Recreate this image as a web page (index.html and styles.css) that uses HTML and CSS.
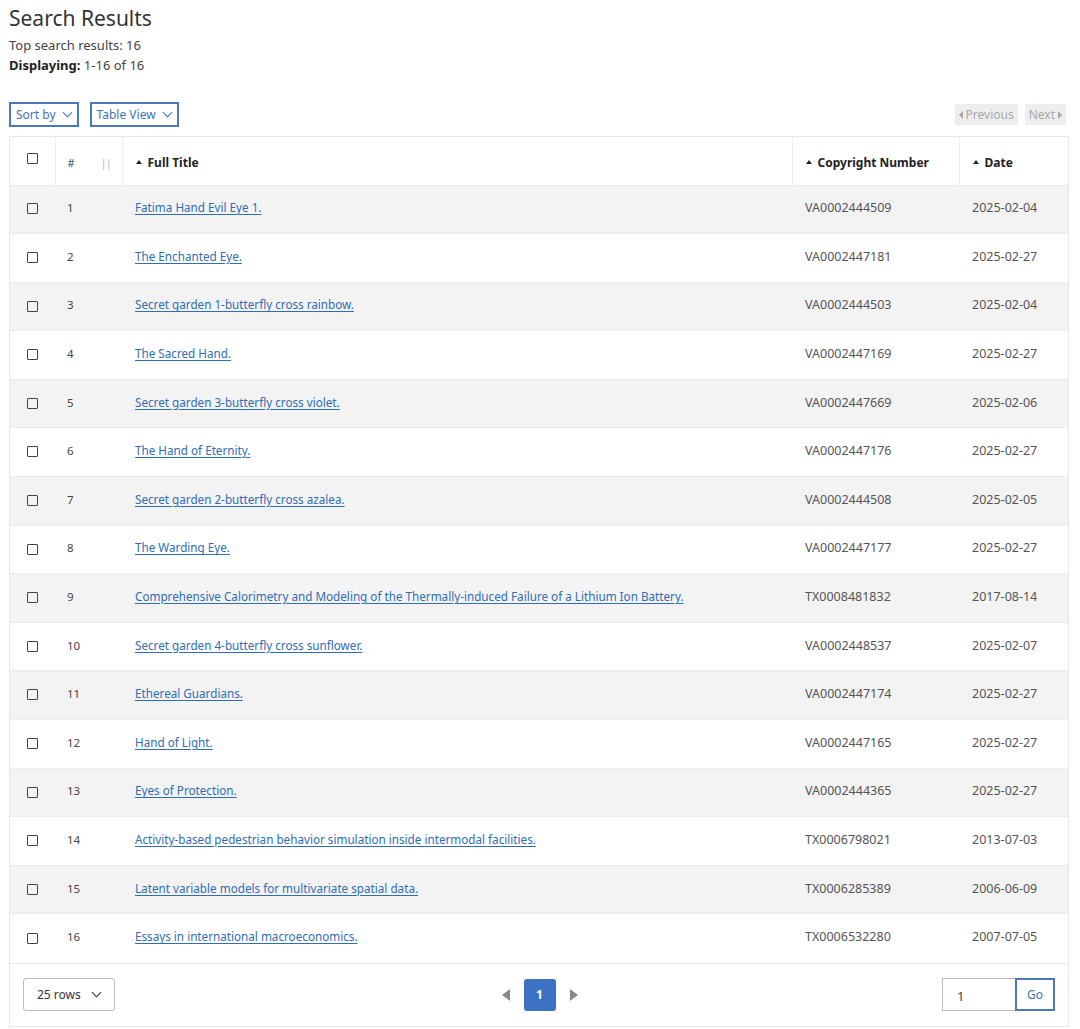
FILE: index.html
```html
<!doctype html>
<html>
<head>
<title>Search Results</title>
<link rel="stylesheet" href="styles.css">
</head>
<body>
<main>
	<h1>Search Results</h1>
	<p class="summary">Top search results: 16</p>
	<p class="summary"><b>Displaying:</b> 1-16 of 16</p>

	<div class="toolbar">
		<div class="dropdowns">
			<div class="drop">Sort by <span class="chev"></span></div>
			<div class="drop">Table View <span class="chev"></span></div>
		</div>
		<div class="pager">
			<div class="pbtn"><span class="tri-l"></span>Previous</div>
			<div class="pbtn">Next<span class="tri-r"></span></div>
		</div>
	</div>

	<div class="results">
		<table>
			<thead>
				<tr>
					<th class="c-check"><span class="box"></span></th>
					<th class="c-num">#<span class="grip">||</span></th>
					<th class="c-title"><span class="caret"></span>Full Title</th>
					<th class="c-copy"><span class="caret"></span>Copyright Number</th>
					<th class="c-date"><span class="caret"></span>Date</th>
				</tr>
			</thead>
			<tbody>
				<tr><td><span class="box"></span></td><td>1</td><td><a href="#">Fatima Hand Evil Eye 1.</a></td><td>VA0002444509</td><td>2025-02-04</td></tr>
				<tr><td><span class="box"></span></td><td>2</td><td><a href="#">The Enchanted Eye.</a></td><td>VA0002447181</td><td>2025-02-27</td></tr>
				<tr><td><span class="box"></span></td><td>3</td><td><a href="#">Secret garden 1-butterfly cross rainbow.</a></td><td>VA0002444503</td><td>2025-02-04</td></tr>
				<tr><td><span class="box"></span></td><td>4</td><td><a href="#">The Sacred Hand.</a></td><td>VA0002447169</td><td>2025-02-27</td></tr>
				<tr><td><span class="box"></span></td><td>5</td><td><a href="#">Secret garden 3-butterfly cross violet.</a></td><td>VA0002447669</td><td>2025-02-06</td></tr>
				<tr><td><span class="box"></span></td><td>6</td><td><a href="#">The Hand of Eternity.</a></td><td>VA0002447176</td><td>2025-02-27</td></tr>
				<tr><td><span class="box"></span></td><td>7</td><td><a href="#">Secret garden 2-butterfly cross azalea.</a></td><td>VA0002444508</td><td>2025-02-05</td></tr>
				<tr><td><span class="box"></span></td><td>8</td><td><a href="#">The Warding Eye.</a></td><td>VA0002447177</td><td>2025-02-27</td></tr>
				<tr><td><span class="box"></span></td><td>9</td><td><a href="#">Comprehensive Calorimetry and Modeling of the Thermally-induced Failure of a Lithium Ion Battery.</a></td><td>TX0008481832</td><td>2017-08-14</td></tr>
				<tr><td><span class="box"></span></td><td>10</td><td><a href="#">Secret garden 4-butterfly cross sunflower.</a></td><td>VA0002448537</td><td>2025-02-07</td></tr>
				<tr><td><span class="box"></span></td><td>11</td><td><a href="#">Ethereal Guardians.</a></td><td>VA0002447174</td><td>2025-02-27</td></tr>
				<tr><td><span class="box"></span></td><td>12</td><td><a href="#">Hand of Light.</a></td><td>VA0002447165</td><td>2025-02-27</td></tr>
				<tr><td><span class="box"></span></td><td>13</td><td><a href="#">Eyes of Protection.</a></td><td>VA0002444365</td><td>2025-02-27</td></tr>
				<tr><td><span class="box"></span></td><td>14</td><td><a href="#">Activity-based pedestrian behavior simulation inside intermodal facilities.</a></td><td>TX0006798021</td><td>2013-07-03</td></tr>
				<tr><td><span class="box"></span></td><td>15</td><td><a href="#">Latent variable models for multivariate spatial data.</a></td><td>TX0006285389</td><td>2006-06-09</td></tr>
				<tr><td><span class="box"></span></td><td>16</td><td><a href="#">Essays in international macroeconomics.</a></td><td>TX0006532280</td><td>2007-07-05</td></tr>
			</tbody>
		</table>

		<div class="footer">
			<div class="rows">25 rows <span class="chev dark"></span></div>
			<div class="pages">
				<span class="arrow-l"></span>
				<span class="page">1</span>
				<span class="arrow-r"></span>
			</div>
			<div class="goto">
				<div class="goto-input">1</div>
				<div class="goto-btn">Go</div>
			</div>
		</div>
	</div>
</main>
</body>
</html>
```

FILE: styles.css
```css
* {
	box-sizing: border-box;
	margin: 0;
	padding: 0;
}

body {
	background: #fff;
	color: #333;
	font-family: "Noto Sans", "Liberation Sans", sans-serif;
	font-size: 13px;
}

main {
	padding: 4px 11px 4px 9px;
}

h1 {
	font-size: 21px;
	font-weight: 400;
	color: #333;
	line-height: 28px;
	margin-bottom: 3px;
}

.summary {
	font-size: 13px;
	line-height: 20px;
	color: #444;
}

.summary b {
	color: #222;
}

.toolbar {
	display: flex;
	justify-content: space-between;
	align-items: center;
	margin-top: 27px;
	margin-bottom: 9px;
}

.dropdowns {
	display: flex;
	gap: 11px;
}

.drop {
	display: flex;
	align-items: center;
	gap: 8px;
	height: 25px;
	padding: 0 4px 0 5px;
	border: 2px solid #4a78b8;
	color: #3f72b8;
	font-size: 12px;
}

.chev {
	display: inline-block;
	width: 7px;
	height: 7px;
	border-right: 1.5px solid #3f72b8;
	border-bottom: 1.5px solid #3f72b8;
	transform: rotate(45deg);
	margin: -4px 2px 0 0;
}

.chev.dark {
	border-color: #333;
}

.pager {
	display: flex;
	gap: 7px;
	margin-right: 3px;
}

.pbtn {
	display: flex;
	align-items: center;
	gap: 3px;
	height: 21px;
	padding: 0 4px;
	background: #eee;
	color: #a8a8a8;
	font-size: 12px;
}

.tri-l, .tri-r {
	display: inline-block;
	width: 0;
	height: 0;
	border-top: 4px solid transparent;
	border-bottom: 4px solid transparent;
}

.tri-l {
	border-right: 4px solid #a8a8a8;
}

.tri-r {
	border-left: 4px solid #a8a8a8;
}

.results {
	border: 1px solid #e8e8e8;
}

table {
	width: 100%;
	border-collapse: collapse;
	table-layout: fixed;
}

th {
	height: 48px;
	padding-top: 3px;
	text-align: left;
	font-size: 12px;
	font-weight: 700;
	color: #222;
	border-left: 1px solid #eee;
	vertical-align: middle;
}

th:first-child {
	border-left: none;
}

.c-check {
	width: 45px;
	text-align: center;
	padding: 0 0 6px;
}

.c-num {
	width: 67px;
	padding-left: 12px;
	font-weight: 400;
	font-size: 11px;
	color: #444;
}

.grip {
	color: #bbb;
	margin-left: 26px;
	font-size: 11px;
	letter-spacing: -1px;
}

.c-title {
	padding-left: 13px;
}

.c-copy {
	width: 167px;
	padding-left: 13px;
}

.c-date {
	width: 109px;
	padding-left: 13px;
}

.caret {
	display: inline-block;
	width: 0;
	height: 0;
	border-left: 3.5px solid transparent;
	border-right: 3.5px solid transparent;
	border-bottom: 4px solid #222;
	margin: 0 6px 0 0;
	vertical-align: 3px;
}

td {
	height: 48.6px;
	padding-bottom: 3px;
	font-size: 12.5px;
	color: #555;
	padding-left: 13px;
	border-top: 1px solid #ececec;
	vertical-align: middle;
}

td:first-child {
	padding-left: 0;
	text-align: center;
}

td:nth-child(2) {
	padding-left: 12px;
	font-size: 11.5px;
	color: #444;
}

tbody tr:nth-child(odd) {
	background: #f3f3f3;
}

a {
	color: #2f6db4;
	font-size: 11.7px;
	text-decoration: underline;
	text-underline-offset: 2px;
}

.box {
	display: inline-block;
	width: 11px;
	height: 11px;
	border: 1.5px solid #444;
	border-radius: 1px;
	vertical-align: middle;
}

.footer {
	display: flex;
	justify-content: space-between;
	align-items: center;
	height: 63px;
	padding: 0 13px 0 13px;
	border-top: 1px solid #ececec;
}

.rows {
	display: flex;
	align-items: center;
	justify-content: space-between;
	width: 92px;
	height: 33px;
	padding: 0 12px 0 13px;
	border: 1px solid #bbb;
	border-radius: 3px;
	font-size: 12px;
	color: #333;
}

.pages {
	display: flex;
	align-items: center;
	gap: 14px;
	margin-left: 22px;
}

.arrow-l, .arrow-r {
	display: inline-block;
	width: 0;
	height: 0;
	border-top: 6px solid transparent;
	border-bottom: 6px solid transparent;
}

.arrow-l {
	border-right: 8px solid #888;
}

.arrow-r {
	border-left: 8px solid #888;
}

.page {
	display: flex;
	align-items: center;
	justify-content: center;
	width: 32px;
	height: 32px;
	background: #3d71c2;
	color: #fff;
	border-radius: 3px;
	font-size: 12px;
	font-weight: 700;
}

.goto {
	display: flex;
	height: 33px;
}

.goto-input {
	width: 73px;
	border: 1px solid #bbb;
	border-right: none;
	padding: 8px 0 0 14px;
	font-size: 13px;
	color: #444;
}

.goto-btn {
	width: 40px;
	border: 2px solid #4a78b8;
	color: #3f72b8;
	font-size: 12px;
	display: flex;
	align-items: center;
	justify-content: center;
}
```
